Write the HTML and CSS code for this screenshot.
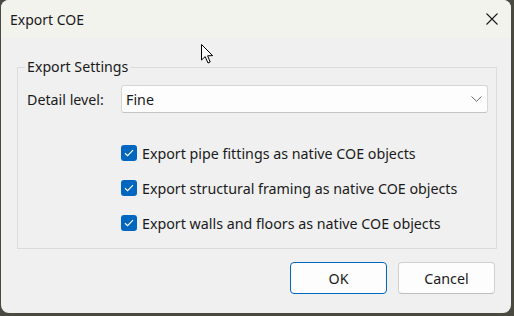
FILE: index.html
```html
<!DOCTYPE html>
<html>
<head>
<meta charset="utf-8">
<link rel="stylesheet" href="styles.css">
</head>
<body>
<div class="window">
  <div class="titlebar">
    <span class="title">Export COE</span>
    <svg class="close" width="12" height="12" viewBox="0 0 12 12"><path d="M0.5 0.5 L11.5 11.5 M11.5 0.5 L0.5 11.5" stroke="#1a1a1a" stroke-width="1.1" fill="none"/></svg>
  </div>
  <div class="body">
    <fieldset class="group">
      <legend>Export Settings</legend>
      <div class="row-detail">
        <label class="label">Detail level:</label>
        <div class="select">
          <span>Fine</span>
          <svg width="11" height="6" viewBox="0 0 11 6"><path d="M0.5 0.5 L5.5 5.3 L10.5 0.5" stroke="#6a6a6a" stroke-width="1" fill="none"/></svg>
        </div>
      </div>
      <div class="checks">
        <div class="check"><span class="box"><svg width="10" height="8" viewBox="0 0 10 8"><path d="M1 4.2 L3.6 6.6 L9 1.2" stroke="#fff" stroke-width="1.2" fill="none"/></svg></span><span>Export pipe fittings as native COE objects</span></div>
        <div class="check"><span class="box"><svg width="10" height="8" viewBox="0 0 10 8"><path d="M1 4.2 L3.6 6.6 L9 1.2" stroke="#fff" stroke-width="1.2" fill="none"/></svg></span><span>Export structural framing as native COE objects</span></div>
        <div class="check"><span class="box"><svg width="10" height="8" viewBox="0 0 10 8"><path d="M1 4.2 L3.6 6.6 L9 1.2" stroke="#fff" stroke-width="1.2" fill="none"/></svg></span><span>Export walls and floors as native COE objects</span></div>
      </div>
    </fieldset>
    <div class="buttons">
      <button class="btn primary">OK</button>
      <button class="btn">Cancel</button>
    </div>
  </div>
  <svg class="cursor" width="13" height="20" viewBox="0 0 13 20"><path d="M0.5 0.5 L0.5 16 L4.2 12.6 L7 19 L9.2 18 L6.6 11.8 L11.6 11.6 Z" fill="#fff" stroke="#000" stroke-width="1" stroke-linejoin="round"/></svg>
</div>
</body>
</html>
```
FILE: styles.css
```css
html, body {
  margin: 0;
  padding: 0;
}
body {
  background: #4a4a40;
  width: 514px;
  height: 316px;
  overflow: hidden;
  font-family: "Noto Sans", "Open Sans", sans-serif;
  color: #1a1a1a;
}
.window {
  position: relative;
  margin-left: 1px;
  width: 510px;
  height: 313px;
  background: #f0f0f0;
  border-radius: 8px;
  overflow: hidden;
  display: flex;
  flex-direction: column;
}
.titlebar {
  height: 38px;
  flex: none;
  background: #f3f3ee;
  display: flex;
  align-items: center;
  justify-content: space-between;
  padding: 0 13px 0 9px;
}
.title {
  font-size: 14px;
}
.body {
  display: flex;
  flex-direction: column;
  padding: 19px 14px 0 16px;
}
.group {
  margin: 0;
  border: 1px solid #dcdcdc;
  padding: 8px 8px 15px 7px;
  font-size: 13px;
}
.group legend {
  padding: 0 2px;
  font-size: 14.2px;
  line-height: 20px;
}
.row-detail {
  display: flex;
  align-items: center;
  padding-left: 2px;
}
.label {
  width: 94px;
  font-size: 14.25px;
}
.select {
  flex: 1;
  height: 26px;
  background: #fdfdfd;
  border: 1px solid #d6d6d6;
  border-bottom-color: #c4c4c4;
  border-radius: 3px;
  display: flex;
  align-items: center;
  justify-content: space-between;
  padding: 0 5px 0 4px;
  font-size: 14.25px;
}
.checks {
  display: flex;
  flex-direction: column;
  gap: 15px;
  margin-top: 30px;
  padding-left: 96px;
}
.check {
  display: flex;
  align-items: center;
  height: 20px;
  gap: 5px;
  font-size: 14.25px;
}
.box {
  width: 16px;
  height: 16px;
  border-radius: 3px;
  background: #0067c0;
  display: flex;
  align-items: center;
  justify-content: center;
}
.buttons {
  display: flex;
  justify-content: flex-end;
  gap: 11px;
  margin-top: 13px;
  padding-right: 2px;
}
.btn {
  width: 97px;
  height: 32px;
  border: 1px solid #d0d0d0;
  border-bottom-color: #bdbdbd;
  border-radius: 4px;
  background: #fdfdfd;
  font-family: "Noto Sans", "Open Sans", sans-serif;
  font-size: 14.25px;
  color: #1a1a1a;
  padding: 0;
}
.btn.primary {
  border: 1px solid #0067c0;
}
.cursor {
  position: absolute;
  left: 200px;
  top: 44px;
}
```
